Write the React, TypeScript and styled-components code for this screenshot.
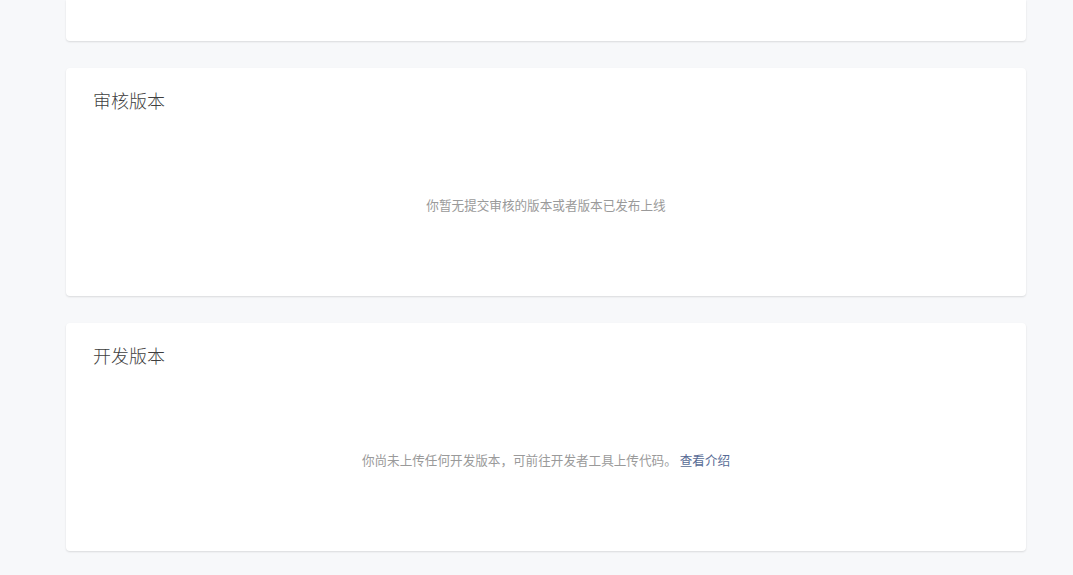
import React from 'react';
import styled, { createGlobalStyle } from 'styled-components';

const GlobalStyle = createGlobalStyle`
  html, body {
    margin: 0;
    padding: 0;
    background: #f7f8fa;
    font-family: "Noto Sans CJK SC", "Noto Sans", sans-serif;
  }
`;

const Page = styled.div`
  width: 960px;
  margin: 0 auto;
  padding-left: 19px;
  display: flex;
  flex-direction: column;
  gap: 27px;
  padding-bottom: 24px;
`;

const Card = styled.section<{ cut?: boolean }>`
  background: #fff;
  border-radius: ${({ cut }) => (cut ? '0 0 4px 4px' : '4px')};
  box-shadow: 0 1px 2px rgba(0, 0, 0, 0.12);
  height: ${({ cut }) => (cut ? '41px' : '228px')};
  box-sizing: border-box;
  padding: 20px 27px 0;
  display: flex;
  flex-direction: column;
`;

const CardTitle = styled.h3`
  margin: 0;
  font-size: 18px;
  font-weight: 300;
  line-height: 24px;
  color: #3e3e3e;
`;

const Empty = styled.div`
  height: 184px;
  display: flex;
  align-items: center;
  justify-content: center;
  font-size: 12.6px;
  color: #9a9a9a;
`;

const Link = styled.a`
  color: #576b95;
  text-decoration: none;
  margin-left: 3px;
  cursor: pointer;
`;

export default function App() {
  return (
    <>
      <GlobalStyle />
      <Page>
        <Card cut />
        <Card>
          <CardTitle>审核版本</CardTitle>
          <Empty>你暂无提交审核的版本或者版本已发布上线</Empty>
        </Card>
        <Card>
          <CardTitle>开发版本</CardTitle>
          <Empty>
            你尚未上传任何开发版本，可前往开发者工具上传代码。
            <Link>查看介绍</Link>
          </Empty>
        </Card>
      </Page>
    </>
  );
}
